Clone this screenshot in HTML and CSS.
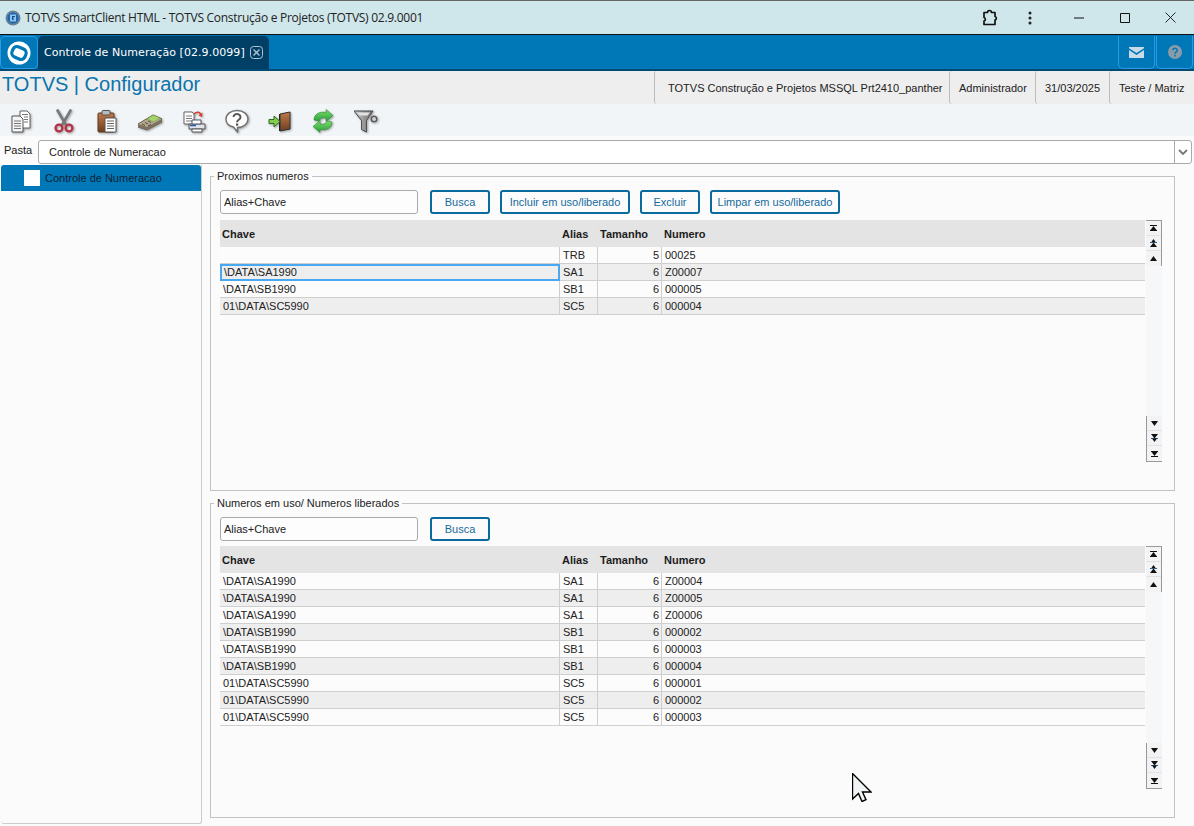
FILE: index.html
```html
<!DOCTYPE html>
<html lang="pt">
<head>
<meta charset="utf-8">
<title>TOTVS SmartClient HTML</title>
<link rel="stylesheet" href="styles.css">
</head>
<body>
<svg class="defs" width="0" height="0" aria-hidden="true">
  <symbol id="s-first" viewBox="0 0 7 6"><path d="M0 .5h7" stroke="#111"/><path d="M0 5.500h7" stroke="#111"/><path d="M3.500 1 6.500 5H.5z" fill="#111"/></symbol>
  <symbol id="s-pgup" viewBox="0 0 7 8"><path d="M3.500 0 6 3.500H1z" fill="#111"/><path d="M0 3.500h7" stroke="#2b5f8a"/><path d="M3.500 3.500 7 8H0z" fill="#111"/></symbol>
  <symbol id="s-up" viewBox="0 0 7 5"><path d="M3.500 0 7 5H0z" fill="#111"/></symbol>
  <symbol id="s-down" viewBox="0 0 7 5"><path d="M0 0h7L3.500 5z" fill="#111"/></symbol>
  <symbol id="s-pgdn" viewBox="0 0 7 8"><path d="M0 0h7L3.500 4.500z" fill="#111"/><path d="M0 4.500h7" stroke="#2b5f8a"/><path d="M1 4.500h5L3.500 8z" fill="#111"/></symbol>
  <symbol id="s-last" viewBox="0 0 7 6"><path d="M0 .5h7" stroke="#111"/><path d="M0 5.500h7" stroke="#111"/><path d="M.5 1h6L3.500 5z" fill="#111"/></symbol>
  <linearGradient id="g-wood" x1="0" y1="0" x2="0" y2="1"><stop offset="0" stop-color="#c07a48"/><stop offset="1" stop-color="#6e3f22"/></linearGradient>
  <linearGradient id="g-green" x1="0" y1="0" x2="0" y2="1"><stop offset="0" stop-color="#7fdc6c"/><stop offset="1" stop-color="#27a039"/></linearGradient>
  <linearGradient id="g-funnel" x1="0" y1="0" x2="1" y2="0"><stop offset="0" stop-color="#c9c9c9"/><stop offset="1" stop-color="#6a6a6a"/></linearGradient>
</svg>

<header class="titlebar">
  <svg class="app-icon" viewBox="0 0 16 16" width="16" height="16"><circle cx="8" cy="8" r="7.500" fill="#6a8196"/><circle cx="8" cy="8" r="5.500" fill="#1a66b0"/><path d="M5 4.500h6v7H5z" fill="#8fc3ee"/><path d="M7 6h3v1H8.500v3H7z" fill="#14508c"/></svg>
  <span class="title-text">TOTVS SmartClient HTML - TOTVS Construção e Projetos (TOTVS) 02.9.0001</span>
  <div class="win-controls">
    <svg class="wc wc-ext" viewBox="0 0 18 18" width="18" height="18"><path d="M3 3.500h3.500a2 2 0 0 1 4 0H14v4a1.800 1.800 0 0 1 0 3.500v4.500H3v-3.500a1.800 1.800 0 0 0 0-3.500z" fill="none" stroke="#111" stroke-width="1.700" stroke-linejoin="round"/></svg>
    <svg class="wc wc-menu" viewBox="0 0 4 14" width="4" height="14"><circle cx="2" cy="2" r="1.500" fill="#222"/><circle cx="2" cy="7" r="1.500" fill="#222"/><circle cx="2" cy="12" r="1.500" fill="#222"/></svg>
    <svg class="wc wc-min" viewBox="0 0 10 10" width="10" height="10"><path d="M0 5h10" stroke="#111"/></svg>
    <svg class="wc wc-max" viewBox="0 0 10 10" width="10" height="10"><path d="M.5.500h9v9h-9z" fill="none" stroke="#111"/></svg>
    <svg class="wc wc-close" viewBox="0 0 11 11" width="11" height="11"><path d="M.5.500l10 10M10.500.500l-10 10" stroke="#111" stroke-width=".9"/></svg>
  </div>
</header>

<nav class="tabbar">
  <button class="home-btn" aria-label="Início">
    <svg viewBox="0 0 24 24" width="24" height="24"><circle cx="12" cy="12" r="11.500" fill="#fff"/><rect x="5" y="6.500" width="14" height="11" rx="4.500" transform="rotate(24 12 12)" fill="#fff" stroke="#0078b8" stroke-width="3.200"/></svg>
  </button>
  <div class="tab">
    <span>Controle de Numeração [02.9.0099]</span>
    <svg class="tab-close" viewBox="0 0 13 13" width="13" height="13"><rect x=".5" y=".5" width="12" height="12" rx="3" fill="none" stroke="#b5c4cf"/><path d="M3.500 3.500l6 6M9.500 3.500l-6 6" stroke="#b5c4cf" stroke-width="1.300"/></svg>
  </div>
  <div class="tab-spacer"></div>
  <button class="tool-btn" aria-label="Mensagens">
    <svg viewBox="0 0 15 11" width="15" height="11"><path d="M0 1.200 7.500 6 15 1.200V0H0zM0 3v8h15V3L7.500 8z" fill="#c9dbe8"/></svg>
  </button>
  <button class="tool-btn" aria-label="Ajuda">
    <svg viewBox="0 0 14 14" width="14" height="14"><circle cx="7" cy="7" r="7" fill="#8b9ca8"/><path d="M4.700 5.200a2.300 2 0 1 1 3.500 1.800c-.8.500-1.200.8-1.200 1.700" fill="none" stroke="#0078b8" stroke-width="1.500"/><rect x="6.200" y="9.800" width="1.600" height="1.700" fill="#0078b8"/></svg>
  </button>
</nav>

<section class="appbar">
  <h1 class="app-name">TOTVS | Configurador</h1>
  <div class="info-cell info-env">TOTVS Construção e Projetos MSSQL Prt2410_panther</div>
  <div class="info-cell info-user">Administrador</div>
  <div class="info-cell info-date">31/03/2025</div>
  <div class="info-cell info-branch">Teste / Matriz</div>
</section>

<section class="toolbar">
  <svg class="tb" viewBox="0 0 24 24" width="24" height="24"><path d="M11 2h7l3 3v14H11z" fill="#fff" stroke="#666"/><path d="M3 7h8l3 3v13H3z" fill="#f4f4f4" stroke="#555"/><path d="M5 12h7M5 14.500h7M5 17h7M5 19.500h7M13 5.500h6M15 8h4M15 10.500h4M15 13h4" stroke="#777"/></svg>
  <svg class="tb" viewBox="0 0 24 24" width="24" height="24"><path d="M5 .5l9 15.500M19 .5 10 16" stroke="#777" stroke-width="2.600"/><circle cx="7" cy="19" r="3.400" fill="none" stroke="#b33345" stroke-width="2.400"/><circle cx="17" cy="19" r="3.400" fill="none" stroke="#b33345" stroke-width="2.400"/></svg>
  <svg class="tb" viewBox="0 0 24 24" width="24" height="24"><rect x="3" y="4" width="16" height="19" rx="1" fill="url(#g-wood)" stroke="#5e3a20"/><rect x="7" y="1.500" width="8" height="4.500" rx="1" fill="#bbb" stroke="#555"/><path d="M10 9h11v14H10z" fill="#fff" stroke="#555"/><path d="M12 12h7M12 14.500h7M12 17h7M12 19.500h7" stroke="#666"/></svg>
  <svg class="tb" viewBox="0 0 24 24" width="24" height="24"><path d="M0 15 15 6l9 4v3L9 21l-9-3z" fill="#b3a78f" stroke="#6a5f4d"/><path d="M0 15v3l9 3v-3zM9 18v3l15-8v-3z" fill="#7c7160"/><path d="M9 10l6-4 7 3-6 4z" fill="#a5d46a" stroke="#6a8a45" stroke-width=".5"/><path d="M4 15l3 1.500M7 13.500l3 1.500M10 12l3 1.500M10 17l3-1.500" stroke="#554b3c"/></svg>
  <svg class="tb" viewBox="0 0 24 24" width="24" height="24"><path d="M2 3h8l2 2v10H2z" fill="#fff" stroke="#666"/><path d="M4 7h6M4 9.500h6M4 12h6" stroke="#777"/><path d="M12 5c3-3 6-2 7 1" fill="none" stroke="#d8402e" stroke-width="1.500"/><path d="M20.500 3.500 20 8l-3.500-1.500z" fill="#d8402e"/><path d="M7 15h16v5H7z" fill="#dfe3ea" stroke="#555"/><path d="M10 11h9v4h-9z" fill="#fff" stroke="#556"/><path d="M10 20h10v3H10z" fill="#fff" stroke="#555"/><path d="M8 16.500h6" stroke="#2757b0" stroke-width="1.500"/></svg>
  <svg class="tb" viewBox="0 0 24 24" width="24" height="24"><path d="M12 1.500C6 1.500 1 5 1 10c0 4 3 7 7.500 8l4 5v-4.500c6 0 10.500-4 10.500-8.500 0-5-5-8.500-11-8.500z" fill="#fdfdfd" stroke="#707070" stroke-width="1.400"/><path d="M8.500 8a3.500 3 0 1 1 5.500 2.500c-1.300.9-2 1.400-2 2.800" fill="none" stroke="#555" stroke-width="2"/><rect x="11" y="14.500" width="2.200" height="2.200" fill="#555"/></svg>
  <svg class="tb" viewBox="0 0 24 24" width="24" height="24"><path d="M12 5l10-2v17l-10 2z" fill="url(#g-wood)" stroke="#2e2e2e"/><path d="M12 5h-1v17h1z" fill="#222"/><path d="M1 10.500h5V7l6 5.500L6 18v-3.500H1z" fill="#84cc50" stroke="#2f6b22"/></svg>
  <svg class="tb" viewBox="0 0 24 24" width="24" height="24"><path d="M3 11C3 5 9 2 15 3.500V.5l7 6-7 6V9c-3-.5-6 0-7 3z" fill="url(#g-green)" stroke="#2c8a35" stroke-width=".6"/><path d="M21 13c0 6-6 9-12 7.500v3l-7-6 7-6V15c3 .5 6 0 7-3z" fill="url(#g-green)" stroke="#2c8a35" stroke-width=".6"/></svg>
  <svg class="tb" viewBox="0 0 24 24" width="24" height="24"><path d="M0 2h19l-6.500 9.500V23l-5-2.500v-9z" fill="url(#g-funnel)" stroke="#4d4d4d"/><path d="M3 3.500h13l-2.500 3h-8z" fill="#e2e2e2"/><circle cx="20" cy="10" r="2.800" fill="none" stroke="#5b5b5b" stroke-width="1.600"/></svg>
</section>

<section class="folder-row">
  <label class="folder-label">Pasta</label>
  <div class="combo">
    <span class="combo-value">Controle de Numeracao</span>
    <span class="combo-arrow"><svg viewBox="0 0 10 6" width="10" height="6"><path d="M1 1l4 4 4-4" fill="none" stroke="#777" stroke-width="1.800"/></svg></span>
  </div>
</section>

<main class="main">
  <aside class="sidebar">
    <div class="side-item"><span class="side-check"></span><span>Controle de Numeracao</span></div>
  </aside>
  <div class="content">
    <section class="group">
      <div class="legend">Proximos numeros</div>
      <div class="search-row">
        <div class="input">Alias+Chave</div>
        <button class="btn btn-first btn-w60">Busca</button>
        <button class="btn btn-w130">Incluir em uso/liberado</button>
        <button class="btn btn-w60">Excluir</button>
        <button class="btn btn-w130">Limpar em uso/liberado</button>
      </div>
      <div class="grid-wrap grid-top">
        <table class="grid">
          <colgroup><col class="c1"><col class="c2"><col class="c3"><col></colgroup>
          <thead><tr><th>Chave</th><th>Alias</th><th>Tamanho</th><th>Numero</th></tr></thead>
          <tbody>
            <tr><td></td><td>TRB</td><td class="num">5</td><td>00025</td></tr>
            <tr class="alt"><td class="focus">\DATA\SA1990</td><td>SA1</td><td class="num">6</td><td>Z00007</td></tr>
            <tr><td>\DATA\SB1990</td><td>SB1</td><td class="num">6</td><td>000005</td></tr>
            <tr class="alt"><td>01\DATA\SC5990</td><td>SC5</td><td class="num">6</td><td>000004</td></tr>
          </tbody>
        </table>
        <div class="scroll">
          <div class="sgroup sgroup-top">
            <span class="sbtn"><svg width="7" height="6"><use href="#s-first"/></svg></span>
            <span class="sbtn"><svg width="7" height="8"><use href="#s-pgup"/></svg></span>
            <span class="sbtn"><svg width="7" height="5"><use href="#s-up"/></svg></span>
          </div>
          <div class="sgroup sgroup-bottom">
            <span class="sbtn"><svg width="7" height="5"><use href="#s-down"/></svg></span>
            <span class="sbtn"><svg width="7" height="8"><use href="#s-pgdn"/></svg></span>
            <span class="sbtn"><svg width="7" height="6"><use href="#s-last"/></svg></span>
          </div>
        </div>
      </div>
    </section>

    <section class="group">
      <div class="legend">Numeros em uso/ Numeros liberados</div>
      <div class="search-row">
        <div class="input">Alias+Chave</div>
        <button class="btn btn-first btn-w60">Busca</button>
      </div>
      <div class="grid-wrap grid-bottom">
        <table class="grid">
          <colgroup><col class="c1"><col class="c2"><col class="c3"><col></colgroup>
          <thead><tr><th>Chave</th><th>Alias</th><th>Tamanho</th><th>Numero</th></tr></thead>
          <tbody>
            <tr><td>\DATA\SA1990</td><td>SA1</td><td class="num">6</td><td>Z00004</td></tr>
            <tr class="alt"><td>\DATA\SA1990</td><td>SA1</td><td class="num">6</td><td>Z00005</td></tr>
            <tr><td>\DATA\SA1990</td><td>SA1</td><td class="num">6</td><td>Z00006</td></tr>
            <tr class="alt"><td>\DATA\SB1990</td><td>SB1</td><td class="num">6</td><td>000002</td></tr>
            <tr><td>\DATA\SB1990</td><td>SB1</td><td class="num">6</td><td>000003</td></tr>
            <tr class="alt"><td>\DATA\SB1990</td><td>SB1</td><td class="num">6</td><td>000004</td></tr>
            <tr><td>01\DATA\SC5990</td><td>SC5</td><td class="num">6</td><td>000001</td></tr>
            <tr class="alt"><td>01\DATA\SC5990</td><td>SC5</td><td class="num">6</td><td>000002</td></tr>
            <tr><td>01\DATA\SC5990</td><td>SC5</td><td class="num">6</td><td>000003</td></tr>
          </tbody>
        </table>
        <div class="scroll">
          <div class="sgroup sgroup-top">
            <span class="sbtn"><svg width="7" height="6"><use href="#s-first"/></svg></span>
            <span class="sbtn"><svg width="7" height="8"><use href="#s-pgup"/></svg></span>
            <span class="sbtn"><svg width="7" height="5"><use href="#s-up"/></svg></span>
          </div>
          <div class="sgroup sgroup-bottom">
            <span class="sbtn"><svg width="7" height="5"><use href="#s-down"/></svg></span>
            <span class="sbtn"><svg width="7" height="8"><use href="#s-pgdn"/></svg></span>
            <span class="sbtn"><svg width="7" height="6"><use href="#s-last"/></svg></span>
          </div>
        </div>
      </div>
    </section>
  </div>
</main>

<svg class="cursor" viewBox="0 0 20 29" width="20" height="29"><path d="M.5.500V26l6-5.500 3.500 8 4-1.800-3.500-7.700H19z" fill="#f1f4f4" stroke="#000" stroke-width="1.400"/></svg>
</body>
</html>
```
FILE: styles.css
```css
* { box-sizing: border-box; }
html, body { height: 100%; }
body {
  margin: 0;
  width: 1194px;
  height: 826px;
  overflow: hidden;
  position: relative;
  display: flex;
  flex-direction: column;
  background: #fbfbfb;
  font: 11px/13px "Liberation Sans", Arial, sans-serif;
  color: #1a1a1a;
}
.defs { position: absolute; }

.titlebar {
  height: 35px;
  flex: none;
  display: flex;
  align-items: center;
  padding: 0 0 0 5px;
  background: #cfe6ea;
  border-top: 1px solid #666;
  border-bottom: 1px solid #111;
}
.app-icon { flex: none; }
.title-text {
  margin-left: 4px;
  font: 12px/16px "Open Sans", "Noto Sans", sans-serif;
  letter-spacing: -.275px;
  color: #222;
  white-space: nowrap;
}
.win-controls { margin-left: auto; display: flex; align-items: center; }
.wc { flex: none; }
.wc-ext { margin-right: 29px; }
.wc-menu { margin-right: 42px; }
.wc-min { margin-right: 36px; }
.wc-max { margin-right: 35px; }
.wc-close { margin-right: 18px; }

.tabbar {
  height: 36px;
  flex: none;
  display: flex;
  align-items: stretch;
  gap: 0;
  background: #0078b8;
  border-bottom: 2px solid #004a73;
  padding: 1px 1px 0 0;
}
.home-btn {
  width: 38px;
  padding: 0;
  display: flex;
  align-items: center;
  justify-content: center;
  background: #0078b8;
  border: 1px solid #2a9ae8;
  border-radius: 5px;
}
.tab {
  width: 231px;
  display: flex;
  align-items: center;
  gap: 5px;
  padding: 0 0 0 6px;
  background: #003f66;
  border-radius: 5px 5px 0 0;
  color: #fff;
  font: 11px/14px "DejaVu Sans", sans-serif;
  letter-spacing: .06px;
  white-space: nowrap;
}
.tab-spacer { flex: 1; }
.tool-btn {
  width: 37px;
  margin-left: 1px;
  padding: 0;
  display: flex;
  align-items: center;
  justify-content: center;
  background: #0078b8;
  border: 1px solid #2a9ae8;
  border-top: 0;
  border-radius: 0 0 5px 5px;
}

.appbar {
  height: 33px;
  flex: none;
  display: flex;
  align-items: center;
  background: #eeeeee;
}
.app-name {
  margin: 0 auto 7px 2px;
  font: 400 20px/26px "Liberation Sans", Arial, sans-serif;
  color: #0a74ad;
}
.info-cell {
  height: 33px;
  padding-top: 1px;
  line-height: 33px;
  border-left: 1px solid #bcbcbc;
  border-radius: 3px 0 0 3px;
  color: #222;
  white-space: nowrap;
}
.info-env { width: 295px; padding-left: 13px; }
.info-user { width: 86px; padding-left: 9px; }
.info-date { width: 74px; padding-left: 9px; }
.info-branch { width: 85px; padding-left: 9px; }

.toolbar {
  height: 32px;
  flex: none;
  display: flex;
  align-items: center;
  padding: 2px 0 0 9px;
  gap: 19.150px;
  background: #f2f5f8;
}
.tb { flex: none; filter: drop-shadow(1px 1px 1px rgba(0, 0, 0, .35)); }

.folder-row {
  height: 28px;
  flex: none;
  display: flex;
  align-items: center;
  padding: 0 2px 0 4px;
}
.folder-label { width: 34px; margin-top: 1px; color: #222; }
.combo {
  flex: 1;
  height: 24px;
  display: flex;
  align-items: stretch;
  border: 1px solid #aaa;
  border-radius: 3px;
  background: #fff;
  margin-top: 4px;
}
.combo-value { flex: 1; padding: 5px 0 0 10px; }
.combo-arrow {
  width: 17px;
  display: flex;
  align-items: center;
  justify-content: center;
  border-left: 1px solid #aaa;
}

.main { flex: 1; display: flex; min-height: 0; padding: 1px 0 2px 1px; }
.sidebar {
  width: 201px;
  flex: none;
  border: 1px solid #ccc;
  border-top: 0;
  border-left: 0;
  border-radius: 0 0 3px 3px;
  background: #fbfbfb;
}
.side-item {
  height: 26px;
  display: flex;
  align-items: center;
  padding-left: 23px;
  gap: 5px;
  background: #0078b8;
  border-radius: 3px 3px 0 0;
  color: #0e2233;
}
.side-check { width: 16px; height: 16px; background: #fff; }

.content {
  flex: 1;
  display: flex;
  flex-direction: column;
  gap: 12px;
  padding: 11px 19px 0 8px;
}
.group {
  position: relative;
  height: 315px;
  flex: none;
  padding: 13px 9px 0 9px;
  border: 1px solid #c2c2c2;
}
.legend {
  position: absolute;
  top: -7px;
  left: 3px;
  padding: 0 3px;
  background: #fbfbfb;
  color: #222;
}

.search-row { display: flex; gap: 10px; height: 24px; }
.input {
  width: 198px;
  height: 24px;
  padding: 5px 3px;
  border: 1px solid #aaa;
  border-radius: 3px;
  background: #fdfdfd;
  color: #222;
}
.btn {
  height: 24px;
  padding: 0;
  border: 2px solid #0a6a9e;
  border-radius: 3px;
  background: #fbfbfb;
  color: #156b9e;
  font: 11px/13px "Liberation Sans", Arial, sans-serif;
}
.btn-first { margin-left: 2px; }
.btn-w60 { width: 60px; }
.btn-w130 { width: 130px; }

.grid-wrap { display: flex; align-items: flex-start; gap: 1px; margin-top: 6px; }
.grid-bottom { margin-top: 5px; }
.grid {
  width: 925px;
  table-layout: fixed;
  border-collapse: separate;
  border-spacing: 0;
}
.c1 { width: 340px; }
.c2 { width: 38px; }
.c3 { width: 64px; }
.grid th {
  height: 27px;
  padding: 1px 2px 0;
  background: #e4e4e4;
  text-align: left;
  font-weight: 700;
  color: #1c1c1c;
}
.grid td {
  height: 17px;
  padding: 0 2px 0 3px;
  line-height: 16px;
  background: #fcfcfc;
  border-right: 1px solid #cfcfcf;
  border-bottom: 1px solid #cfcfcf;
  color: #222;
  white-space: nowrap;
}
.grid td:last-child { border-right: 0; }
.grid .alt td { background: #eeeeee; }
.grid td.num { text-align: right; }
.grid td.focus { outline: 2px solid #4aa8f0; outline-offset: -2px; padding-left: 4px; }

.scroll {
  width: 16px;
  flex: none;
  display: flex;
  flex-direction: column;
  justify-content: space-between;
  background: #f5f7f9;
}
.grid-top .scroll { height: 242px; }
.grid-bottom .scroll { height: 243px; }
.sgroup { display: flex; flex-direction: column; background: #f3f3f5; }
.sgroup-top { border-top: 1px solid #999; border-right: 1px solid #999; }
.sgroup-bottom { border-bottom: 1px solid #999; border-left: 1px solid #999; }
.sbtn {
  height: 15px;
  display: flex;
  align-items: center;
  justify-content: center;
  border-bottom: 1px solid #e2e2e2;
}
.sbtn:last-child { border-bottom: 0; }

.cursor { position: absolute; left: 852px; top: 773px; }
```
